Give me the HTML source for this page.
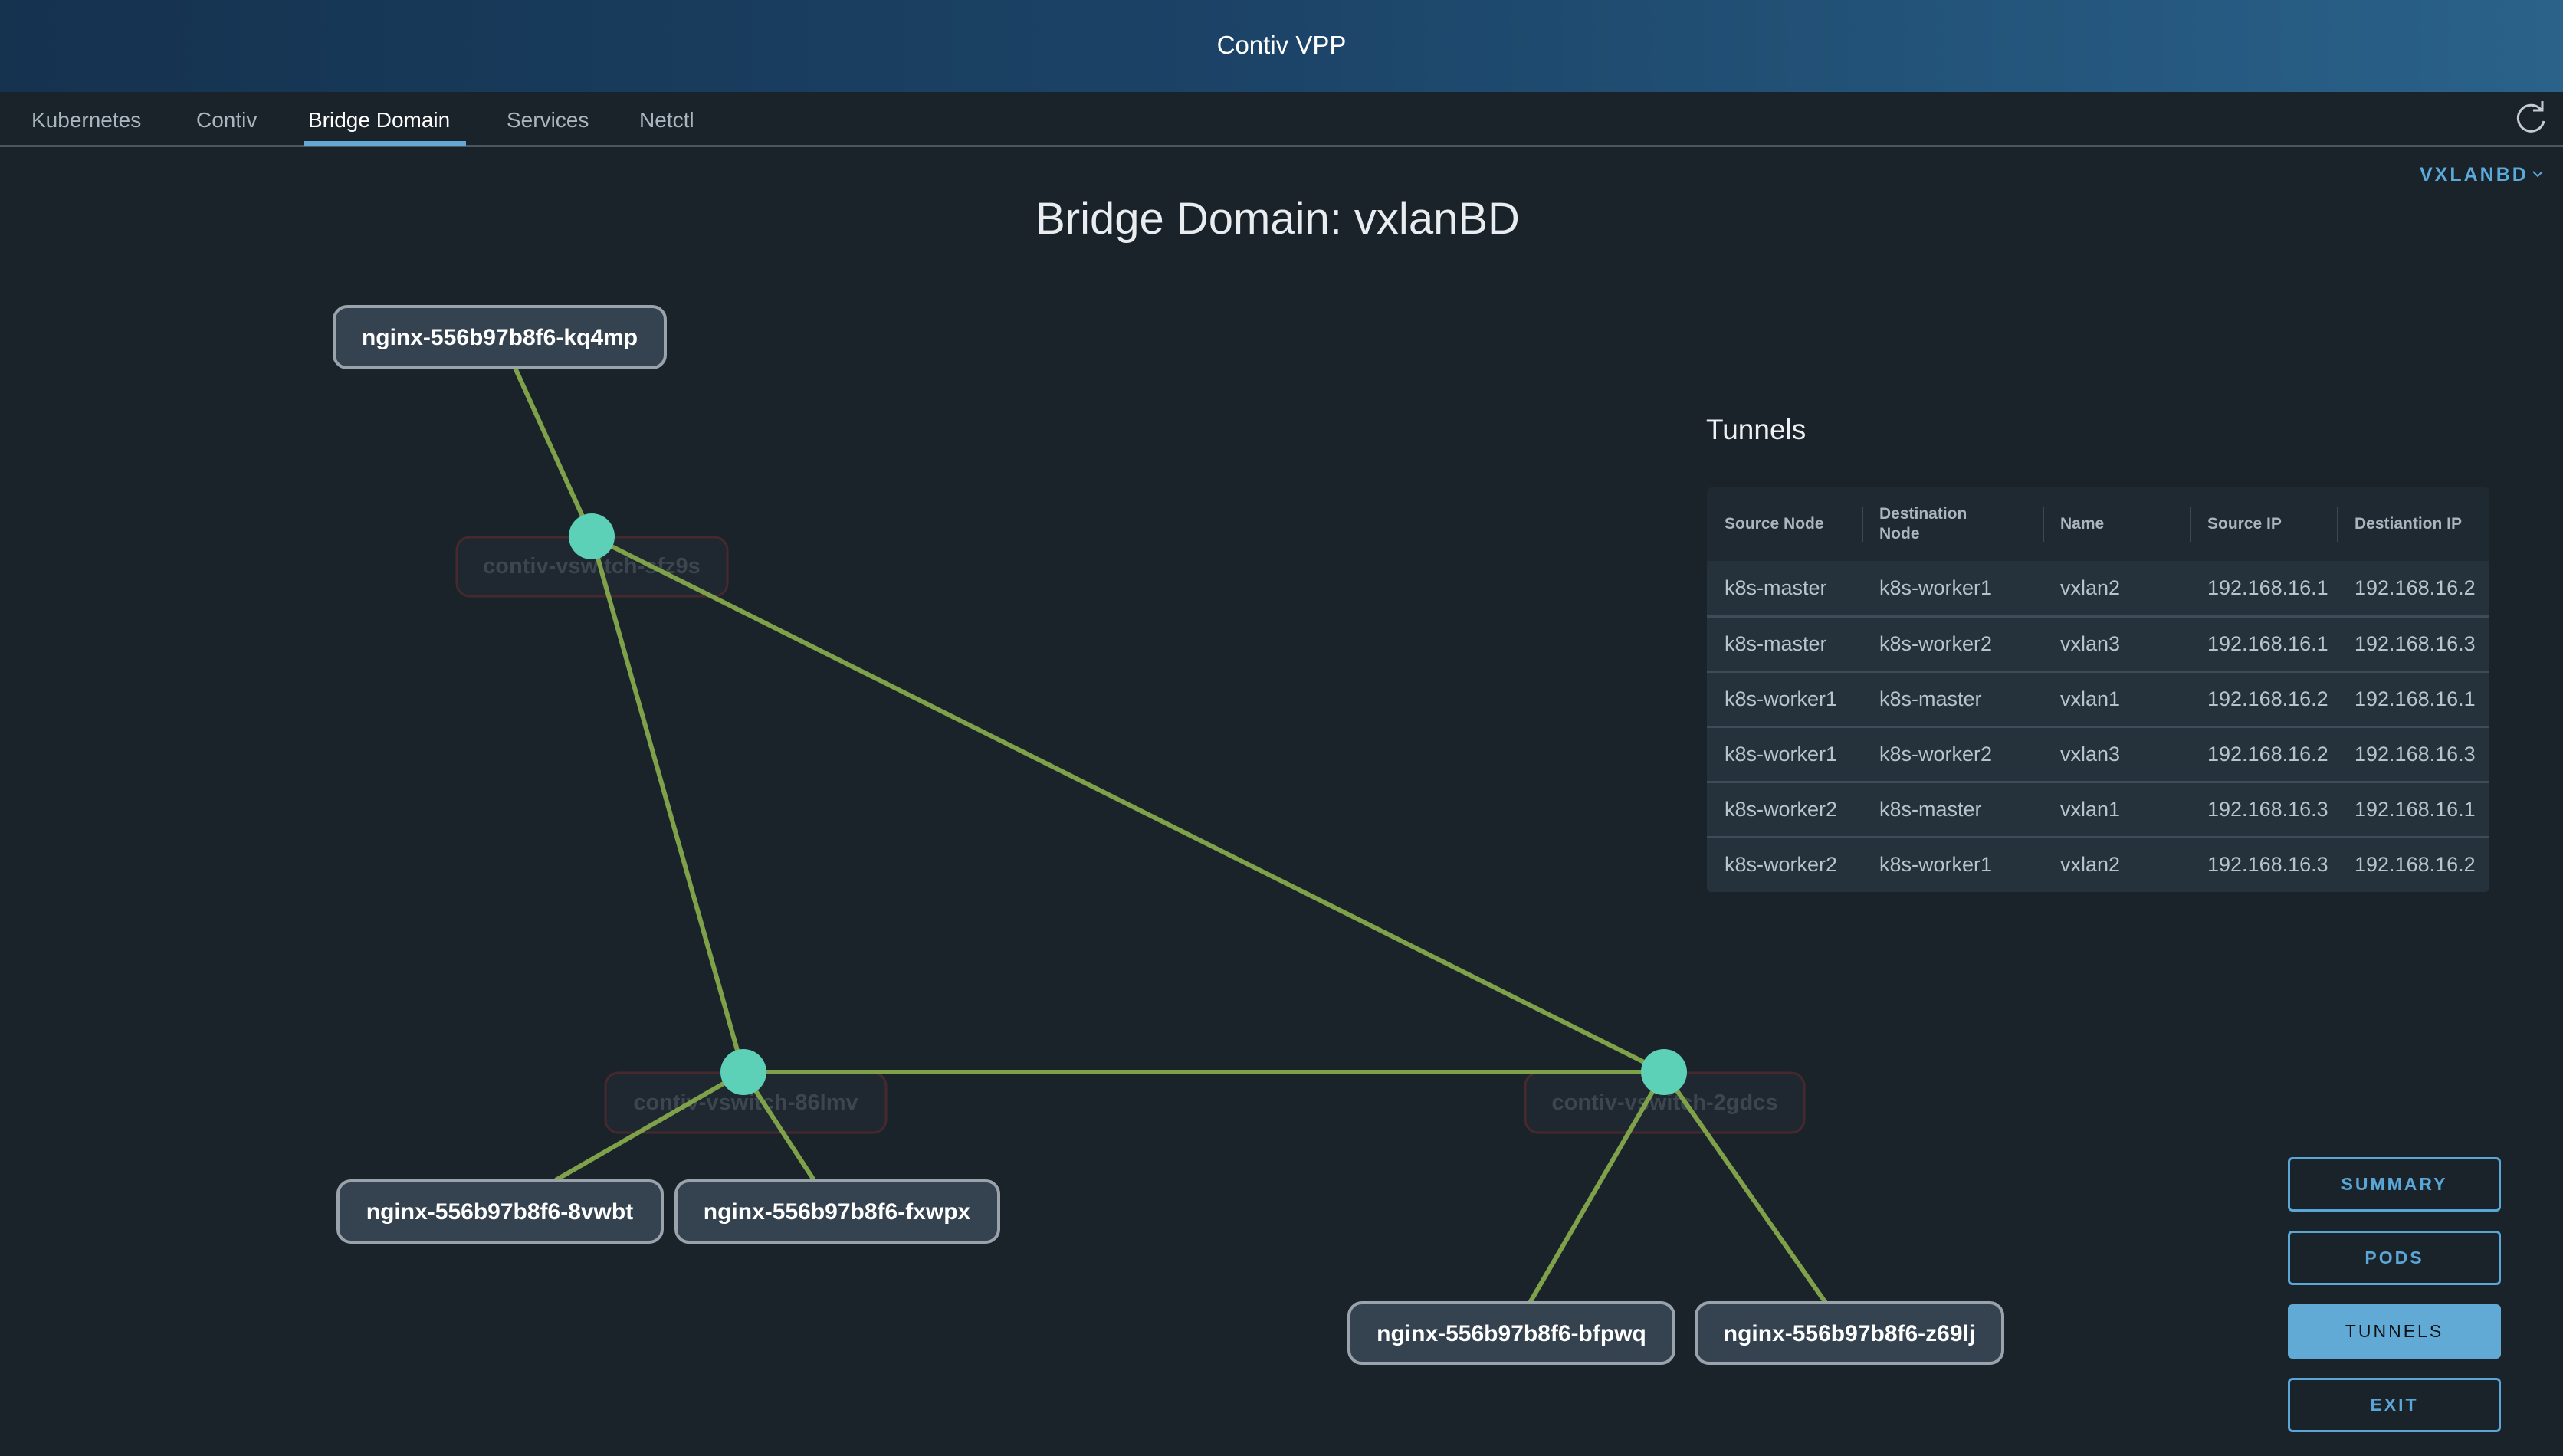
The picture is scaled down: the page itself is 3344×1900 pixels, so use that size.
<!DOCTYPE html>
<html><head><meta charset="utf-8"><style>
*{margin:0;padding:0;box-sizing:border-box}
body{width:3344px;height:1900px;background:#1b232a;font-family:"Liberation Sans",sans-serif;position:relative;overflow:hidden}
.hdr{position:absolute;left:0;top:0;width:3344px;height:120px;background:linear-gradient(90deg,#15324f,#1c4468 50%,#2a628a);color:#fff;font-size:33px;text-align:center;line-height:118px}
.nav{position:absolute;top:0;left:0}
.nav span{position:absolute;top:141px;font-size:28px;color:#a9b6c0;white-space:nowrap}
.div{position:absolute;left:0;top:189px;width:3344px;height:3px;background:#4b5661}
.ul{position:absolute;left:397px;top:184px;width:211px;height:7px;background:#62a9d6}
.title{position:absolute;left:0;width:3334px;top:252px;text-align:center;font-size:58px;color:#e9edf0}
.vx{position:absolute;left:3157px;top:214px;font-size:25px;font-weight:bold;letter-spacing:3px;color:#5aaadc}
.tun{position:absolute;left:2226px;top:540px;font-size:37px;color:#eef1f3}
table{position:absolute;left:2227px;top:636px;width:1021px;border-collapse:collapse;border-radius:6px;overflow:hidden}
th{background:#1f2932;height:96px;text-align:left;font-size:21px;color:#a9b5bf;padding-left:23px;line-height:26px;position:relative}
th+th:before{content:"";position:absolute;left:0;top:25px;height:46px;width:2px;background:#3d4852}
td{background:#25323b;height:72px;font-size:27px;color:#b8c4cc;padding-left:23px;border-top:3px solid #3f4c57}
.btn{position:absolute;left:2985px;width:278px;height:71px;border:3px solid #5aa6d6;border-radius:6px;color:#5aa6d6;font-size:23px;font-weight:bold;letter-spacing:3px;text-align:center;line-height:65px}
</style></head><body>
<div class="hdr">Contiv VPP</div>
<div class="nav">
<span style="left:41px">Kubernetes</span>
<span style="left:256px">Contiv</span>
<span style="left:402px;color:#fff">Bridge Domain</span>
<span style="left:661px">Services</span>
<span style="left:834px">Netctl</span>
</div>
<div class="div"></div><div class="ul"></div>
<svg style="position:absolute;left:3278px;top:130px" width="48" height="48" viewBox="0 0 48 48"><path d="M38 14 A17 17 0 1 0 41 28" fill="none" stroke="#c4ccd2" stroke-width="3"/><path d="M27 14 H39 V2" fill="none" stroke="#c4ccd2" stroke-width="3"/></svg>
<div class="title">Bridge Domain: vxlanBD</div>
<div class="vx">VXLANBD</div>
<svg style="position:absolute;left:3303px;top:221px" width="16" height="12" viewBox="0 0 16 12"><path d="M2 3 L8 9 L14 3" fill="none" stroke="#5aaadc" stroke-width="2"/></svg>

<svg style="position:absolute;left:0;top:0" width="3344" height="1900">
<g fill="#1f2730" stroke="#47292d" stroke-width="3">
<rect x="596" y="701" width="353" height="77" rx="17"/>
<rect x="790" y="1400" width="366" height="78" rx="17"/>
<rect x="1990" y="1400" width="364" height="78" rx="17"/>
</g>
<g fill="#3c464f" font-family="Liberation Sans, sans-serif" font-weight="bold" font-size="29" text-anchor="middle">
<text x="772" y="748">contiv-vswitch-sfz9s</text>
<text x="973" y="1448">contiv-vswitch-86lmv</text>
<text x="2172" y="1448">contiv-vswitch-2gdcs</text>
</g>
<g stroke="#7fa14a" stroke-width="6">
<line x1="672" y1="480" x2="772" y2="700"/>
<line x1="772" y1="700" x2="970" y2="1399"/>
<line x1="772" y1="700" x2="2171" y2="1399"/>
<line x1="970" y1="1399" x2="2171" y2="1399"/>
<line x1="970" y1="1399" x2="725" y2="1540"/>
<line x1="970" y1="1399" x2="1062" y2="1540"/>
<line x1="2171" y1="1399" x2="1996" y2="1700"/>
<line x1="2171" y1="1399" x2="2382" y2="1700"/>
</g>
<g fill="#5dd0b8"><circle cx="772" cy="700" r="30"/><circle cx="970" cy="1399" r="30"/><circle cx="2171" cy="1399" r="30"/></g>
<g fill="#34434f" stroke="#9aa3ab" stroke-width="4">
<rect x="436" y="400" width="432" height="80" rx="17"/>
<rect x="441" y="1541" width="423" height="80" rx="17"/>
<rect x="882" y="1541" width="421" height="80" rx="17"/>
<rect x="1760" y="1700" width="424" height="79" rx="17"/>
<rect x="2213" y="1700" width="400" height="79" rx="17"/>
</g>
<g fill="#fff" font-family="Liberation Sans, sans-serif" font-weight="bold" font-size="30" text-anchor="middle">
<text x="652" y="450">nginx-556b97b8f6-kq4mp</text>
<text x="652" y="1591">nginx-556b97b8f6-8vwbt</text>
<text x="1092" y="1591">nginx-556b97b8f6-fxwpx</text>
<text x="1972" y="1750">nginx-556b97b8f6-bfpwq</text>
<text x="2413" y="1750">nginx-556b97b8f6-z69lj</text>
</g>
</svg>

<div class="tun">Tunnels</div>
<table>
<tr><th style="width:202px">Source Node</th><th style="width:236px">Destination<br>Node</th><th style="width:192px">Name</th><th style="width:192px">Source IP</th><th>Destiantion IP</th></tr>
<tr><td style="border-top:none">k8s-master</td><td style="border-top:none">k8s-worker1</td><td style="border-top:none">vxlan2</td><td style="border-top:none">192.168.16.1</td><td style="border-top:none">192.168.16.2</td></tr>
<tr><td>k8s-master</td><td>k8s-worker2</td><td>vxlan3</td><td>192.168.16.1</td><td>192.168.16.3</td></tr>
<tr><td>k8s-worker1</td><td>k8s-master</td><td>vxlan1</td><td>192.168.16.2</td><td>192.168.16.1</td></tr>
<tr><td>k8s-worker1</td><td>k8s-worker2</td><td>vxlan3</td><td>192.168.16.2</td><td>192.168.16.3</td></tr>
<tr><td>k8s-worker2</td><td>k8s-master</td><td>vxlan1</td><td>192.168.16.3</td><td>192.168.16.1</td></tr>
<tr><td>k8s-worker2</td><td>k8s-worker1</td><td>vxlan2</td><td>192.168.16.3</td><td>192.168.16.2</td></tr>
</table>

<div class="btn" style="top:1510px">SUMMARY</div>
<div class="btn" style="top:1606px">PODS</div>
<div class="btn" style="top:1702px;background:#62aad6;border-color:#62aad6;color:#0d1216;font-weight:normal">TUNNELS</div>
<div class="btn" style="top:1798px">EXIT</div>
</body></html>
